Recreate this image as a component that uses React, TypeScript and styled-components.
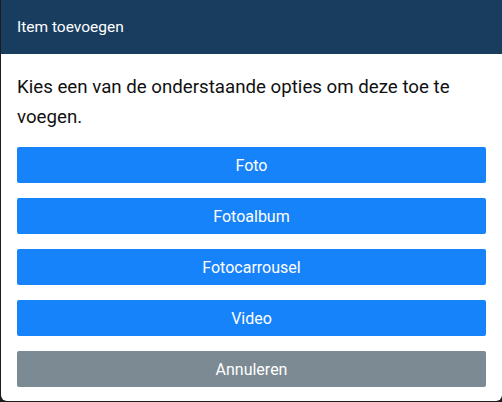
import { FC } from 'react';
import styled, { createGlobalStyle } from 'styled-components';

const GlobalStyle = createGlobalStyle`
  html, body {
    margin: 0;
    padding: 0;
    background: #1c1c1c;
  }
  body {
    font-family: Roboto, "Liberation Sans", sans-serif;
  }
`;

const StyledModal = styled.div`
  display: flex;
  flex-flow: column nowrap;
  width: 501px;
  height: 401px;
  margin-left: 1px;
  background-color: #ffffff;
  border-radius: 0 0 6px 6px;
  overflow: hidden;
`;

const ModalHeader = styled.header`
  display: flex;
  align-items: center;
  height: 54px;
  padding: 0 16px;
  background-color: #183d5f;
  color: #ffffff;
  font-size: 15.5px;
`;

const ModalContent = styled.section`
  display: flex;
  flex-flow: column nowrap;
  gap: 15px;
  padding: 18px 16px 0 16px;
`;

const Intro = styled.p`
  margin: 0;
  font-size: 18.7px;
  line-height: 30px;
  color: #111111;
`;

const ButtonList = styled.div`
  display: flex;
  flex-flow: column nowrap;
  gap: 15px;
`;

const OptionButton = styled.button<{ $variant?: 'primary' | 'secondary' }>`
  height: 36px;
  border: none;
  border-radius: 2px;
  background-color: ${({ $variant }) => ($variant === 'secondary' ? '#7b8a93' : '#1783fb')};
  color: #ffffff;
  font-family: Roboto, "Liberation Sans", sans-serif;
  font-size: 16px;
  cursor: pointer;
`;

const options = ['Foto', 'Fotoalbum', 'Fotocarrousel', 'Video'];

const App: FC = () => {
  return (
    <>
      <GlobalStyle />
      <StyledModal>
        <ModalHeader>Item toevoegen</ModalHeader>
        <ModalContent>
          <Intro>Kies een van de onderstaande opties om deze toe te voegen.</Intro>
          <ButtonList>
            {options.map((label) => (
              <OptionButton key={label}>{label}</OptionButton>
            ))}
            <OptionButton $variant="secondary">Annuleren</OptionButton>
          </ButtonList>
        </ModalContent>
      </StyledModal>
    </>
  );
};

export default App;
